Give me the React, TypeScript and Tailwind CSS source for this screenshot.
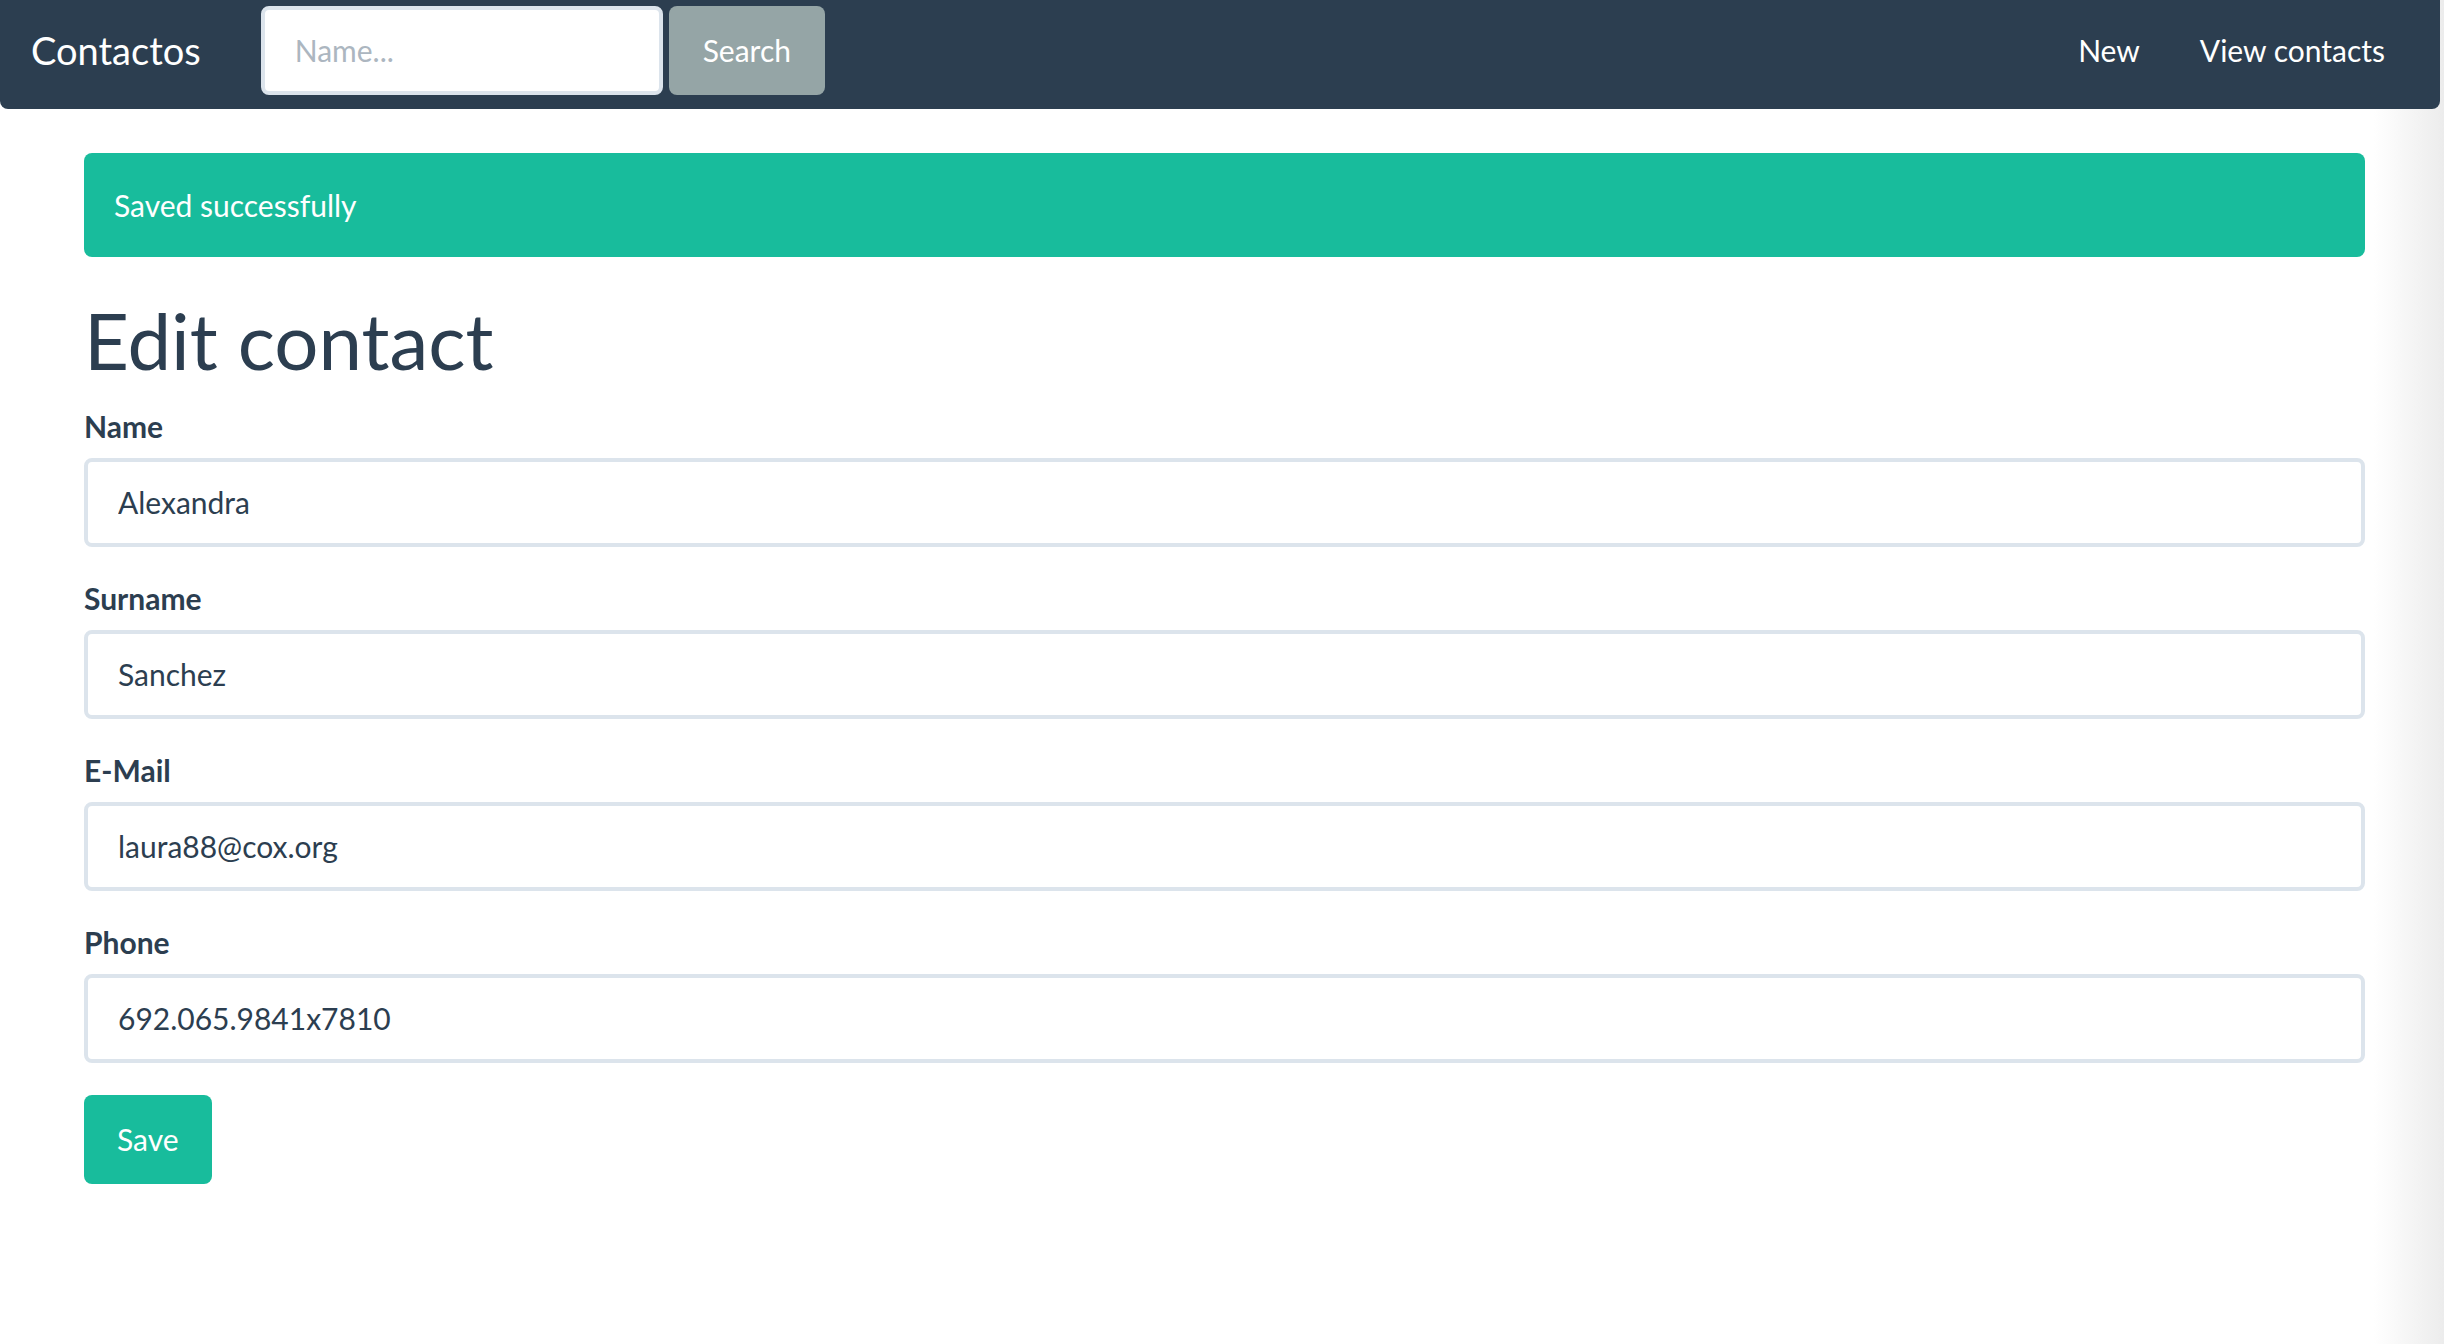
import type { ReactNode } from "react";

const fields = [
  { label: "Name", value: "Alexandra" },
  { label: "Surname", value: "Sanchez" },
  { label: "E-Mail", value: "laura88@cox.org" },
  { label: "Phone", value: "692.065.9841x7810" },
];

function NavLink({ children }: { children: ReactNode }) {
  return (
    <a href="#" className="px-[30px] text-[30px] leading-none text-white">
      {children}
    </a>
  );
}

function Field({ label, value }: { label: string; value: string }) {
  return (
    <div className="mb-[30px]">
      <label className="block text-[30px] font-bold leading-[43px] mb-[10px] text-[#2c3e50]">
        {label}
      </label>
      <input
        type="text"
        defaultValue={value}
        className="block w-full h-[89px] border-4 border-[#dce4ec] rounded-lg px-[30px] text-[30px] text-[#2c3e50] bg-white outline-none"
      />
    </div>
  );
}

export default function App() {
  return (
    <div
      className="relative min-h-[1344px] bg-white text-[#2c3e50] overflow-hidden"
      style={{ fontFamily: "Lato, 'Open Sans', sans-serif" }}
    >
      {/* window edge shadow on the right */}
      <div className="pointer-events-none absolute top-0 right-0 h-full w-[70px] bg-linear-to-r from-white/0 to-[#ececec]" />

      <nav className="relative z-10 h-[109px] w-[2440px] bg-[#2c3e50] rounded-b-lg flex items-center pb-[9px] pl-[31px] pr-[25px]">
        <span className="text-[38px] leading-none text-white">Contactos</span>
        <form className="ml-[60px] flex items-center gap-[6px]">
          <input
            type="text"
            placeholder="Name..."
            className="w-[402px] h-[89px] border-4 border-[#dce4ec] rounded-lg bg-white px-[30px] text-[30px] text-[#2c3e50] placeholder:text-[#acb6c0] outline-none"
          />
          <button
            type="button"
            className="h-[89px] px-[34px] rounded-lg bg-[#95a5a6] text-white text-[30px]"
          >
            Search
          </button>
        </form>
        <div className="ml-auto flex items-center">
          <NavLink>New</NavLink>
          <NavLink>View contacts</NavLink>
        </div>
      </nav>

      <main className="relative ml-[84px] w-[2281px] pt-[44px]">
        <div className="h-[104px] rounded-lg bg-[#18bc9c] px-[30px] flex items-center text-white text-[30px]">
          Saved successfully
        </div>

        <h1 className="mt-[41px] mb-[21px] text-[78px] leading-[1.1] font-normal">
          Edit contact
        </h1>

        <form>
          {fields.map((f) => (
            <Field key={f.label} label={f.label} value={f.value} />
          ))}
          <button
            type="button"
            className="mt-[2px] h-[89px] px-[33px] rounded-lg bg-[#18bc9c] text-white text-[30px]"
          >
            Save
          </button>
        </form>
      </main>
    </div>
  );
}
